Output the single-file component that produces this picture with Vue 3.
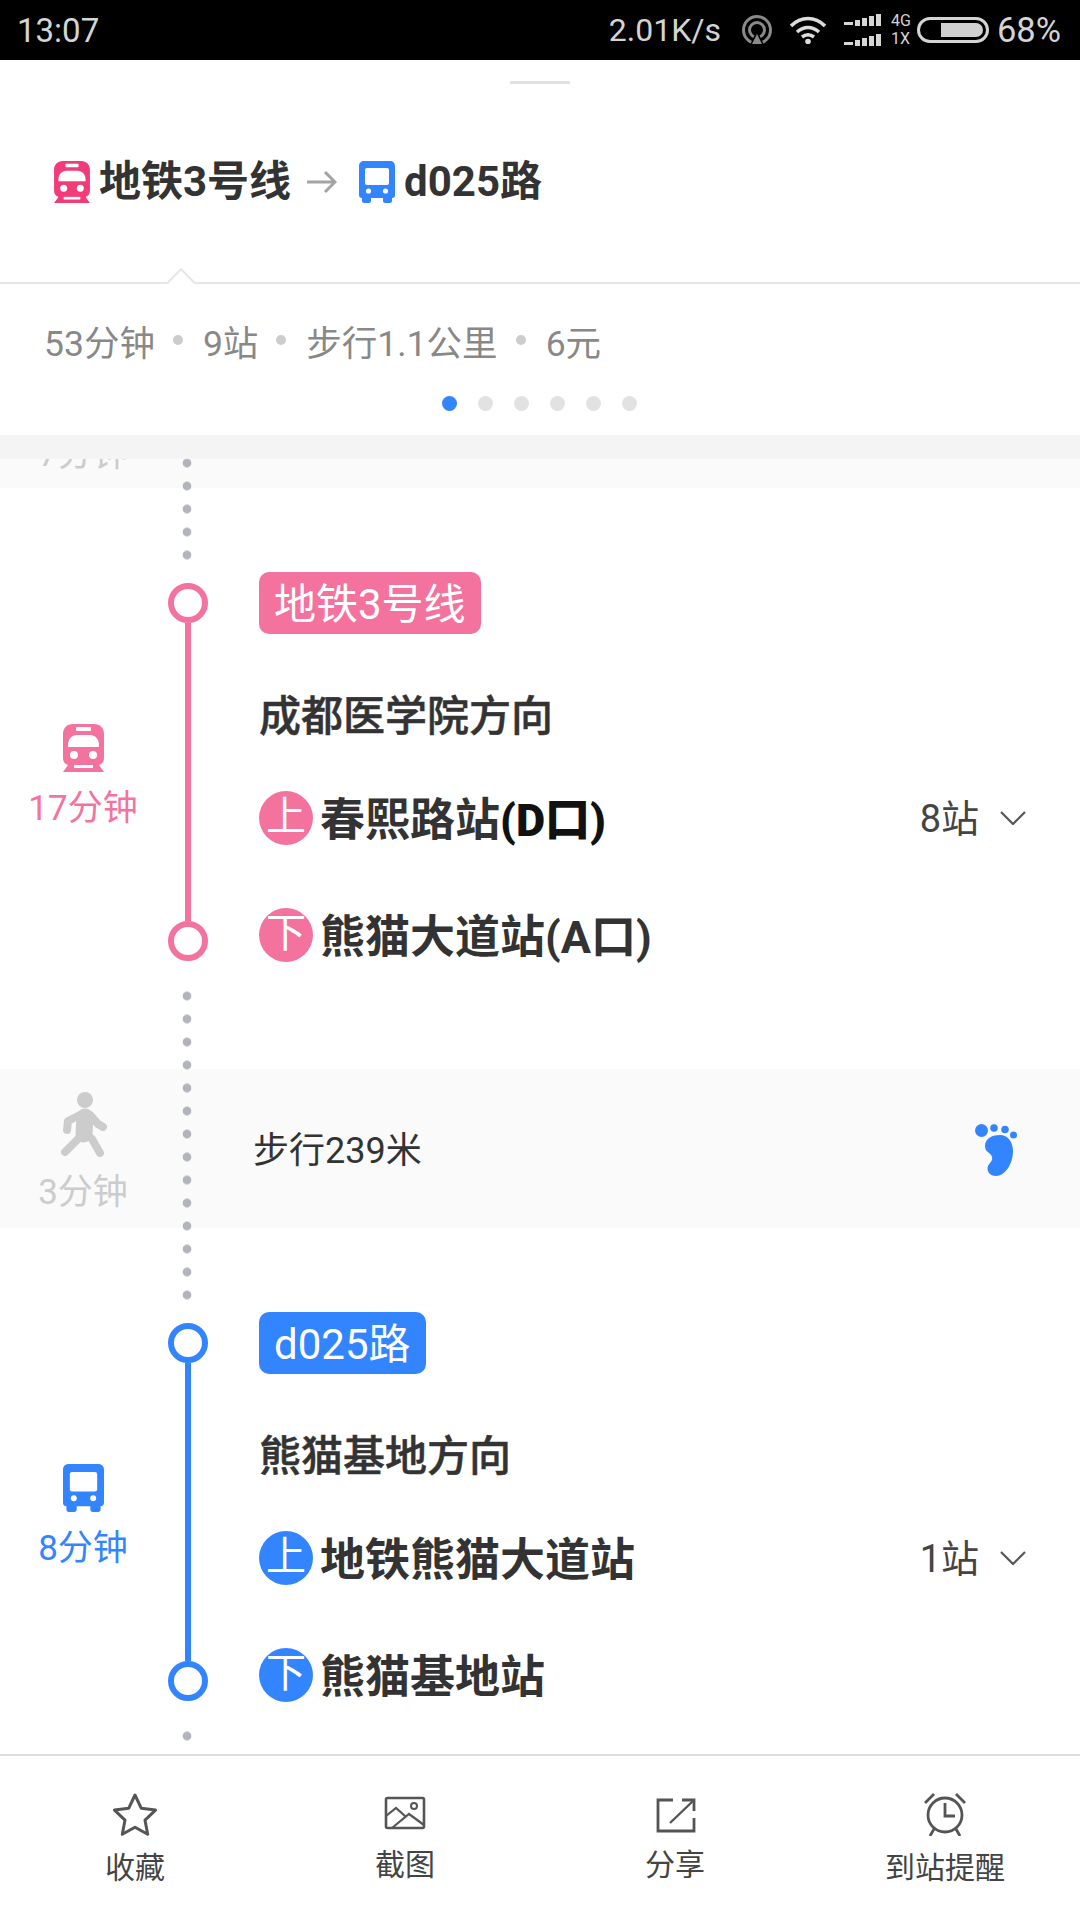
<template>
  <div class="page">
    <div class="status">
      <span class="clock">13:07</span>
      <div class="status-right">
        <span class="speed">2.01K/s</span>
        <svg class="ic-hotspot" viewBox="0 0 32 30" width="32" height="30">
          <circle cx="16" cy="15" r="13.5" fill="none" stroke="#8a8a8a" stroke-width="3" />
          <circle cx="16" cy="15" r="7.5" fill="none" stroke="#8a8a8a" stroke-width="3" />
          <path d="M16 15l7 15H9z" fill="#000" />
          <path d="M16 19l5 10H11z" fill="#8a8a8a" />
        </svg>
        <svg class="ic-wifi" viewBox="0 0 38 28" width="38" height="28">
          <path d="M2 10c10-10 24-10 34 0M8 16c7-6 15-6 22 0M13 21c4-3 8-3 12 0" fill="none" stroke="#dcdcdc" stroke-width="3.6" />
          <circle cx="19" cy="25.5" r="2.8" fill="#dcdcdc" />
        </svg>
        <svg class="ic-signal" viewBox="0 0 38 32" width="38" height="32">
          <g v-for="y in [0, 20]" :key="y" :transform="`translate(0 ${y})`" fill="#d6d6d6">
            <rect x="0" y="8" width="9" height="3" />
            <rect x="11" y="6" width="5" height="6" />
            <rect x="18" y="4" width="5" height="8" />
            <rect x="25" y="2" width="5" height="10" />
            <rect x="32" y="0" width="5" height="12" />
          </g>
        </svg>
        <div class="net"><span>4G</span><span>1X</span></div>
        <div class="battery"><div class="battery-fill"></div></div>
        <span class="percent">68%</span>
      </div>
    </div>

    <div class="head">
      <div class="handle"></div>
      <div class="route">
        <svg class="title-icon" viewBox="0 0 41 48" width="36" height="42">
          <path :d="trainPath" fill="#f23c78" />
          <rect x="13" y="3" width="15" height="4" rx="1" fill="#fff" />
          <path :d="trainWindow" fill="#fff" />
          <circle cx="11" cy="31" r="4" fill="#fff" />
          <circle cx="30" cy="31" r="4" fill="#fff" />
          <rect x="11" y="41" width="19" height="3" fill="#fff" />
        </svg>
        <span class="route-name">地铁3号线</span>
        <svg class="route-arrow" viewBox="0 0 30 24" width="30" height="24">
          <path d="M0 12h28M18 2l10 10-10 10" fill="none" stroke="#a3a3a3" stroke-width="3" />
        </svg>
        <svg class="title-icon" viewBox="0 0 36 42" width="36" height="42">
          <path :d="busPath" fill="#3385ff" />
          <rect x="6" y="7" width="24" height="17" rx="2" fill="#fff" />
          <circle cx="9.5" cy="30" r="2.6" fill="#fff" />
          <circle cx="26.5" cy="30" r="2.6" fill="#fff" />
        </svg>
        <span class="route-name">d025路</span>
      </div>
      <div class="caret"></div>
    </div>

    <div class="summary">
      <div class="facts">
        <template v-for="(fact, i) in facts" :key="fact">
          <span v-if="i" class="fact-sep"></span>
          <span>{{ fact }}</span>
        </template>
      </div>
      <div class="pager">
        <span v-for="n in 6" :key="n" class="pager-dot" :class="{ on: n === 1 }"></span>
      </div>
    </div>

    <div class="scroller">
      <div class="shade"></div>
      <div class="stub">
        <div class="time-col stub-time">7分钟</div>
        <div class="rail"><div class="dots dots-stub"></div></div>
      </div>

      <template v-for="(seg, i) in segments" :key="seg.tag">
        <div class="seg" :class="seg.kind">
          <div class="time-col seg-time">
            <svg v-if="seg.kind === 'subway'" viewBox="0 0 41 48" width="41" height="48">
              <path :d="trainPath" fill="#f4739e" />
              <rect x="13" y="3" width="15" height="4" rx="1" fill="#fff" />
              <path :d="trainWindow" fill="#fff" />
              <circle cx="11" cy="31" r="4" fill="#fff" />
              <circle cx="30" cy="31" r="4" fill="#fff" />
              <rect x="11" y="41" width="19" height="3" fill="#fff" />
            </svg>
            <svg v-else viewBox="0 0 36 42" width="41" height="48">
              <path :d="busPath" fill="#3385ff" />
              <rect x="6" y="7" width="24" height="17" rx="2" fill="#fff" />
              <circle cx="9.5" cy="30" r="2.6" fill="#fff" />
              <circle cx="26.5" cy="30" r="2.6" fill="#fff" />
            </svg>
            <span class="time-label">{{ seg.time }}</span>
          </div>
          <div class="rail">
            <div class="dots dots-head"></div>
            <div class="ring"></div>
            <div class="line"></div>
            <div class="ring"></div>
            <div class="dots dots-tail"></div>
          </div>
          <div class="body">
            <span class="tag">{{ seg.tag }}</span>
            <div class="direction">{{ seg.direction }}</div>
            <div class="stop stop-on">
              <span class="badge">上</span>
              <span class="stop-name">{{ seg.on }}<b v-if="seg.onExit" class="exit">{{ seg.onExit }}</b></span>
              <span class="count">{{ seg.count }}</span>
              <svg class="chevron" viewBox="0 0 26 14" width="26" height="14">
                <path d="M1 1l12 12L25 1" fill="none" stroke="#555" stroke-width="2.2" />
              </svg>
            </div>
            <div class="stop stop-off">
              <span class="badge">下</span>
              <span class="stop-name">{{ seg.off }}</span>
            </div>
          </div>
        </div>

        <div v-if="i === 0" class="walk">
          <div class="time-col walk-time">
            <svg viewBox="0 0 47 65" width="47" height="65">
              <circle cx="25" cy="8" r="8" fill="#ccc" />
              <path d="M25 25l-1 17" fill="none" stroke="#ccc" stroke-width="17" stroke-linecap="round" />
              <path d="M20 23L8 29 7 38M30 23l8 9 5 3M23 42L5 60M26 42l6 5 8 14" fill="none" stroke="#ccc" stroke-width="8" stroke-linecap="round" stroke-linejoin="round" />
            </svg>
            <span class="time-label">3分钟</span>
          </div>
          <div class="rail"><div class="dots dots-walk"></div></div>
          <span class="walk-text">步行239米</span>
          <svg class="foot" viewBox="0 0 42 52" width="42" height="52">
            <circle cx="6.5" cy="6.5" r="6.5" fill="#3385ff" />
            <circle cx="19" cy="4" r="3.8" fill="#3385ff" />
            <circle cx="30" cy="5.5" r="3.8" fill="#3385ff" />
            <circle cx="38.5" cy="11" r="3.5" fill="#3385ff" />
            <path d="M10 22C10 14 18 11 25 11 33 11 38 18 38 27 38 40 30 52 21 52 15 52 11 47 13 42 15 38 18 37 17 33 16 28 10 29 10 22z" fill="#3385ff" />
          </svg>
        </div>
      </template>
    </div>

    <div class="tabs">
      <div class="tab">
        <svg viewBox="0 0 46 44" width="46" height="44">
          <path d="M23 3l6.2 13.2 14.3 1.900-10.500 10 2.700 14.200L23 35.200l-12.700 7.100L13 28.100 2.500 18.100l14.300-1.900z" fill="none" stroke="#555" stroke-width="3" stroke-linejoin="round" />
        </svg>
        <span>收藏</span>
      </div>
      <div class="tab tab-tight">
        <svg viewBox="0 0 46 44" width="46" height="44">
          <rect x="4" y="6" width="38" height="30" rx="1.500" fill="none" stroke="#555" stroke-width="2.600" />
          <circle cx="32" cy="14" r="3" fill="none" stroke="#555" stroke-width="2" />
          <path d="M4 24l10-8 9 8M10 36l17-14 15 11" fill="none" stroke="#555" stroke-width="2.200" />
        </svg>
        <span>截图</span>
      </div>
      <div class="tab tab-tight">
        <svg viewBox="0 0 46 44" width="46" height="44">
          <path d="M21 8H6v31h36V26M30 8h12v11" fill="none" stroke="#555" stroke-width="2.800" />
          <path d="M41 9L18 31" fill="none" stroke="#555" stroke-width="2.400" />
        </svg>
        <span>分享</span>
      </div>
      <div class="tab">
        <svg viewBox="0 0 46 44" width="46" height="44">
          <circle cx="23" cy="23" r="17" fill="none" stroke="#555" stroke-width="2.800" />
          <path d="M23 11v13h10M3 11l9-9M43 11l-9-9M12 37l-4 7M34 37l4 7" fill="none" stroke="#555" stroke-width="2.800" />
        </svg>
        <span>到站提醒</span>
      </div>
    </div>
  </div>
</template>

<script setup>
const trainPath = 'M10 0h21c6 0 10 4 10 10v24c0 4-2 6-5 7l5 7H0l5-7c-3-1-5-3-5-7V10C0 4 4 0 10 0z'
const trainWindow = 'M5 21c0-6 4-10 9-10h13c5 0 9 4 9 10v2H5z'
const busPath = 'M5 0h26c3 0 5 2 5 5v29c0 2-1 3-3 3v3c0 1-1 2-2 2h-5c-1 0-2-1-2-2v-3H12v3c0 1-1 2-2 2H5c-1 0-2-1-2-2v-3c-2 0-3-1-3-3V5c0-3 2-5 5-5z'

const facts = ['53分钟', '9站', '步行1.1公里', '6元']

const segments = [
  {
    kind: 'subway',
    time: '17分钟',
    tag: '地铁3号线',
    direction: '成都医学院方向',
    on: '春熙路站',
    onExit: '(D口)',
    count: '8站',
    off: '熊猫大道站(A口)',
  },
  {
    kind: 'bus',
    time: '8分钟',
    tag: 'd025路',
    direction: '熊猫基地方向',
    on: '地铁熊猫大道站',
    count: '1站',
    off: '熊猫基地站',
  },
]
</script>

<style>
body {
  margin: 0;
  background: #fff;
}
</style>

<style scoped>
.page {
  width: 1080px;
  height: 1920px;
  display: flex;
  flex-direction: column;
  overflow: hidden;
  background: #fff;
  font-family: Roboto, "Noto Sans CJK SC", sans-serif;
  color: #333;
}

.status {
  height: 60px;
  flex: none;
  background: #000;
  display: flex;
  align-items: center;
  justify-content: space-between;
  padding: 0 19px 0 17px;
  color: #d4d4d4;
  font-size: 33px;
}

.status-right {
  display: flex;
  align-items: center;
}

.speed {
  font-size: 32px;
}

.percent {
  font-size: 34.5px;
}

.ic-hotspot {
  margin-left: 20px;
}

.ic-wifi {
  margin-left: 16px;
}

.ic-signal {
  margin-left: 17px;
}

.net {
  display: flex;
  flex-direction: column;
  margin-left: 9px;
  font-size: 16px;
  line-height: 18px;
  width: 24px;
}

.battery {
  width: 72px;
  height: 26px;
  box-sizing: border-box;
  border: 3px solid #d4d4d4;
  border-radius: 13px;
  margin: 0 8px 0 2px;
  display: flex;
  justify-content: flex-end;
  padding: 3px;
}

.battery-fill {
  width: 42px;
  background: #d0d0d0;
  border-radius: 0 8px 8px 0;
}

.head {
  position: relative;
  height: 224px;
  flex: none;
  box-sizing: border-box;
  border-bottom: 2px solid #e6e6e6;
}

.handle {
  width: 60px;
  height: 3px;
  margin: 21px auto 0;
  background: #e0e0e0;
}

.route {
  display: flex;
  align-items: center;
  margin-top: 77px;
  padding-left: 54px;
}

.route-name {
  font-size: 42px;
  font-weight: 700;
  line-height: 42px;
  margin-left: 9px;
}

.route-arrow {
  margin: 0 22px 0 16px;
}

.caret {
  position: absolute;
  left: 171px;
  bottom: -10px;
  width: 18px;
  height: 18px;
  background: #fff;
  border-top: 2px solid #e6e6e6;
  border-left: 2px solid #e6e6e6;
  transform: rotate(45deg);
}

.summary {
  height: 151px;
  flex: none;
  box-sizing: border-box;
  padding: 34px 0 0 44px;
}

.facts {
  display: flex;
  align-items: center;
  height: 44px;
  font-size: 35.5px;
  color: #888;
}

.fact-sep {
  width: 10px;
  height: 10px;
  border-radius: 50%;
  background: #ccc;
  margin: 0 20px 0 18px;
}

.pager {
  display: flex;
  gap: 21px;
  margin: 34px 0 0 398px;
}

.pager-dot {
  width: 15px;
  height: 15px;
  border-radius: 50%;
  background: #e2e2e2;
}

.pager-dot.on {
  background: #3385ff;
}

.scroller {
  flex: 1;
  min-height: 0;
  overflow: hidden;
}

.shade {
  height: 24px;
  background: #f4f4f4;
}

.stub {
  height: 29px;
  display: flex;
  overflow: hidden;
  background: #fafafa;
}

.time-col {
  width: 166px;
  margin-right: 2px;
  flex: none;
  display: flex;
  flex-direction: column;
  align-items: center;
}

.stub-time {
  margin-top: -26px;
  font-size: 35px;
  line-height: 44px;
  color: #ccc;
}

.rail {
  width: 40px;
  flex: none;
  display: flex;
  flex-direction: column;
  align-items: center;
}

.dots {
  width: 10px;
  margin-left: -2px;
  background: radial-gradient(circle at center, #b2b4bc 4px, transparent 4.7px) repeat-y;
  background-size: 10px 23px;
}

.dots-stub {
  height: 29px;
  background-position: 0 -7.5px;
}

.dots-head {
  height: 72px;
  margin-bottom: 23px;
  background-position: 0 9.5px;
}

.dots-tail {
  height: 85px;
  margin-top: 23px;
  background-position: 0 0.5px;
}

.dots-walk {
  height: 159px;
  background-position: 0 7.5px;
}

.seg {
  display: flex;
  height: 581px;
  --accent: #f4739e;
}

.seg.bus {
  --accent: #3385ff;
  height: 610px;
}

.seg-time {
  height: 578px;
  justify-content: center;
  color: var(--accent);
}

.time-label {
  margin-top: 15px;
  font-size: 35px;
  line-height: 44px;
}

.ring {
  width: 40px;
  height: 40px;
  flex: none;
  box-sizing: border-box;
  border: 6px solid var(--accent);
  border-radius: 50%;
  background: #fff;
}

.line {
  width: 6px;
  height: 298px;
  flex: none;
  background: var(--accent);
}

.body {
  flex: 1;
  min-width: 0;
  margin-left: 51px;
  padding: 84px 54px 0 0;
  display: flex;
  flex-direction: column;
  align-items: flex-start;
}

.tag {
  height: 62px;
  box-sizing: border-box;
  padding: 0 15px;
  border-radius: 10px;
  background: var(--accent);
  color: #fff;
  font-size: 42px;
  line-height: 66px;
}

.direction {
  margin-top: 53px;
  font-size: 42px;
  font-weight: 500;
  line-height: 60px;
  -webkit-text-stroke: 0.5px #333;
}

.stop {
  display: flex;
  align-items: center;
  width: 100%;
  height: 56px;
}

.stop-on {
  margin-top: 43px;
}

.stop-off {
  margin-top: 61px;
}

.badge {
  width: 54px;
  height: 54px;
  flex: none;
  border-radius: 50%;
  background: var(--accent);
  color: #fff;
  font-size: 40px;
  line-height: 52px;
  text-align: center;
  margin-right: 7px;
}

.stop-name {
  padding-top: 6px;
  font-size: 45px;
  font-weight: 700;
  line-height: 56px;
}

.exit {
  color: #111;
}

.count {
  margin-left: auto;
  padding-top: 2px;
  color: #444;
  font-size: 38px;
  line-height: 56px;
}

.chevron {
  margin-left: 21px;
}

.walk {
  position: relative;
  display: flex;
  align-items: center;
  height: 159px;
  background: #fafafa;
}

.walk .rail {
  align-self: flex-start;
}

.walk-time {
  align-self: flex-start;
  box-sizing: border-box;
  padding-top: 23px;
  color: #ccc;
}

.walk-time .time-label {
  margin-top: 14px;
}

.walk-text {
  margin: -4px 0 0 45px;
  font-size: 36px;
}

.foot {
  margin: 2px 63px 0 auto;
}

.tabs {
  height: 166px;
  flex: none;
  box-sizing: border-box;
  border-top: 2px solid #ddd;
  display: flex;
  background: #fff;
}

.tab {
  flex: 1;
  display: flex;
  flex-direction: column;
  align-items: center;
  padding-top: 36px;
  color: #444;
  font-size: 30px;
  line-height: 40px;
}

.tab span {
  margin-top: 12px;
}

.tab-tight span {
  margin-top: 9px;
}
</style>
